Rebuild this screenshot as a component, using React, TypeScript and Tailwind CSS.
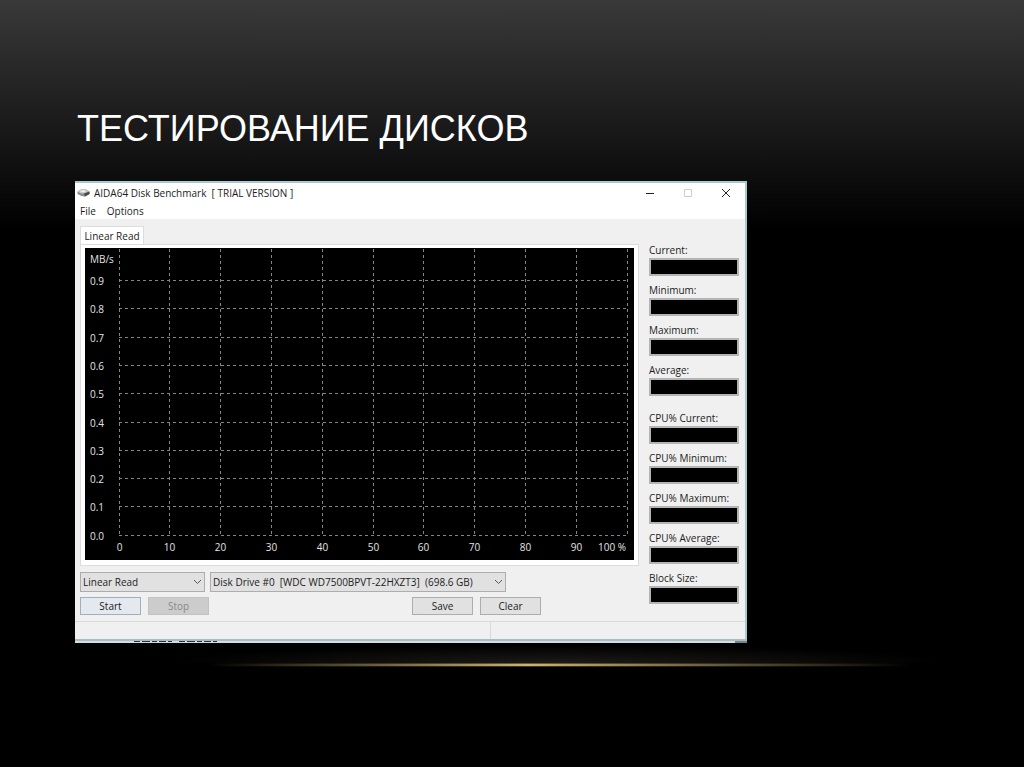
import type { ReactNode } from "react"

const readings = ["Current:", "Minimum:", "Maximum:", "Average:"]
const cpuReadings = ["CPU% Current:", "CPU% Minimum:", "CPU% Maximum:", "CPU% Average:", "Block Size:"]

function Reading({ label }: { label: string }) {
  return (
    <label className="flex flex-col">
      <span className="h-4 leading-4">{label}</span>
      <input readOnly className="h-[18px] w-full border-2 border-[#b4b4b4] bg-black px-1 text-white outline-none" />
    </label>
  )
}

function PushButton({ children, className = "border-[#adadad] bg-[#e1e1e1]", disabled = false }: { children: ReactNode; className?: string; disabled?: boolean }) {
  return (
    <button disabled={disabled} className={`h-[18px] w-[61px] border leading-4 ${className}`}>
      {children}
    </button>
  )
}

function Dropdown({ label, option, className }: { label: string; option: string; className: string }) {
  return (
    <div className={`relative ${className}`}>
      <select aria-label={label} className="block h-5 w-full appearance-none border border-[#adadad] bg-[#e1e1e1] pl-[2px] whitespace-pre outline-none">
        <option>{option}</option>
      </select>
      <svg className="pointer-events-none absolute top-[7px] right-[3px]" width="9" height="6" viewBox="0 0 9 6" fill="none" stroke="#555">
        <path d="M1 1l3.5 3.5L8 1" />
      </svg>
    </div>
  )
}

function DiskIcon() {
  return (
    <svg width="13" height="10" viewBox="0 0 13 10">
      <path d="M0.5 3.5L4 1.5H9L12.5 3.5V6L8 8.5L4.5 8L0.5 6Z" fill="#8b8b8b" />
      <path d="M0.5 3.5L4 1.5H9L12.5 3.5L8 5.5H4Z" fill="#c4c4c4" />
      <path d="M7 5.5L12.5 3.5V6L8 8.5Z" fill="#4a4a4a" />
      <ellipse cx="6" cy="3.2" rx="2.8" ry="1" fill="#eee" />
    </svg>
  )
}

function Chart() {
  const columns = Array.from({ length: 11 }, (_, i) => i)
  const rows = Array.from({ length: 10 }, (_, i) => i)
  const x = (i: number) => Math.floor(34 + i * 50.8) + 0.5
  const y = (i: number) => Math.round(33 + i * 28.3) - 0.5

  return (
    <svg viewBox="0 0 549 312" className="block w-full bg-black" fill="#e4e4e4" fontSize="10" role="img" aria-label="Linear read speed">
      <g stroke="#858585" strokeDasharray="3 3">
        {columns.map((i) => (
          <line key={i} x1={x(i)} x2={x(i)} y1="1" y2="288" />
        ))}
        {rows.map((i) => (
          <line key={i} x1="34" x2="542" y1={y(i)} y2={y(i)} />
        ))}
      </g>
      <text x="5" y="15">MB/s</text>
      {rows.map((i) => (
        <text key={i} x="5" y={y(i) + 4}>{(0.9 - i / 10).toFixed(1)}</text>
      ))}
      {columns.slice(0, 10).map((i) => (
        <text key={i} x={x(i)} y="303" textAnchor="middle">{i * 10}</text>
      ))}
      <text x="541" y="303" textAnchor="end">100 %</text>
    </svg>
  )
}

function BenchmarkWindow() {
  return (
    <section className="w-full max-w-[672px] bg-[#f0f0f0] font-['Open_Sans','Noto_Sans',sans-serif] text-[10px] text-[#1c1c1c]">
      <div className="border-t-2 border-r-2 border-[#abc8ce]">
        {/* Title bar */}
        <header className="flex h-5 items-center bg-white pr-[14px] pl-[2px]">
          <DiskIcon />
          <h2 className="ml-1 grow whitespace-pre">AIDA64 Disk Benchmark  [ TRIAL VERSION ]</h2>
          <div className="flex gap-7">
            <button aria-label="Minimize">
              <svg width="10" height="10" stroke="#222"><path d="M1 5.5h8" /></svg>
            </button>
            <button aria-label="Maximize" disabled>
              <svg width="10" height="10" fill="none" stroke="#ccc"><path d="M1.5 1.5h7v7h-7z" /></svg>
            </button>
            <button aria-label="Close">
              <svg width="10" height="10" stroke="#222"><path d="M1 1l8 8M9 1l-8 8" /></svg>
            </button>
          </div>
        </header>
        <nav className="flex h-4 gap-[11px] bg-white pl-[5px]">
          <button>File</button>
          <button>Options</button>
        </nav>

        <div className="flex gap-[10px] pt-[7px] pr-[6px] pl-[5px]">
          <main className="min-w-0 grow">
            <button role="tab" aria-selected="true" className="block h-[18px] w-16 border border-b-0 border-[#dcdcdc] bg-white leading-4">Linear Read</button>
            <div className="border border-[#dcdcdc] bg-white px-1 pt-[3px] pb-[5px]">
              <Chart />
            </div>
            <div className="mt-[6px] flex gap-[5px]">
              <Dropdown label="Test" option="Linear Read" className="w-[125px]" />
              <Dropdown label="Drive" option={"Disk Drive #0\u00a0 [WDC WD7500BPVT-22HXZT3]\u00a0 (698.6 GB)"} className="w-[296px]" />
            </div>
            <div className="mt-[5px] flex gap-[7px]">
              <PushButton className="border-[#9fb0bc] bg-[#e3e9ee]">Start</PushButton>
              <PushButton disabled className="border-[#c2c2c2] bg-[#cccccc] text-[#8a8a8a]">Stop</PushButton>
              <div className="w-[189px]" />
              <PushButton>Save</PushButton>
              <PushButton>Clear</PushButton>
            </div>
          </main>
          <aside className="flex w-[90px] shrink-0 flex-col gap-[6px] pt-4">
            {readings.map((label) => (
              <Reading key={label} label={label} />
            ))}
            <div className="mt-2 flex flex-col gap-[6px]">
              {cpuReadings.map((label) => (
                <Reading key={label} label={label} />
              ))}
            </div>
          </aside>
        </div>

        {/* Status bar */}
        <footer className="mt-[6px] flex h-[18px] border-t border-[#d9d9d9]">
          <div className="w-[416px] border-r border-[#d9d9d9]" />
        </footer>
      </div>
      <div className="flex h-1 justify-between border-t-2 border-[#a9bcc1] bg-[#d4dde1]">
        <svg className="ml-[59px]" width="88" height="1" stroke="#26323a" strokeWidth="2">
          <path d="M0 1h88" strokeDasharray="6 2 8 2 5 2 7 2 4 7" />
        </svg>
        <div className="h-[2px] w-3 bg-[#71868b]" />
      </div>
    </section>
  )
}

export default function App() {
  return (
    <div className="min-h-screen bg-black bg-linear-to-b/srgb from-[#393939] to-black to-[230px] px-[75px] pt-[103px]">
      <h1 className="ml-[2px] h-[78px] font-['Arial_Narrow','Liberation_Sans',sans-serif] text-4xl leading-[52px] text-white">
        ТЕСТИРОВАНИЕ ДИСКОВ
      </h1>
      <BenchmarkWindow />
      {/* Glowing line under the window */}
      <div className="mt-[2px] ml-auto w-full max-w-[780px]">
        <div className="h-[18px] bg-radial-[50%_100%_at_50%_100%] from-[#1c1a17] to-transparent" />
        <div className="h-px bg-linear-to-r from-transparent from-5% via-[#6b5b35] via-46% to-transparent to-95%" />
        <div className="h-[2px] bg-linear-to-r from-transparent from-5% via-[#c9b575] via-46% to-transparent to-95%" />
        <div className="h-px bg-linear-to-r from-transparent from-5% via-[#4a3513] via-46% to-transparent to-95%" />
      </div>
    </div>
  )
}
